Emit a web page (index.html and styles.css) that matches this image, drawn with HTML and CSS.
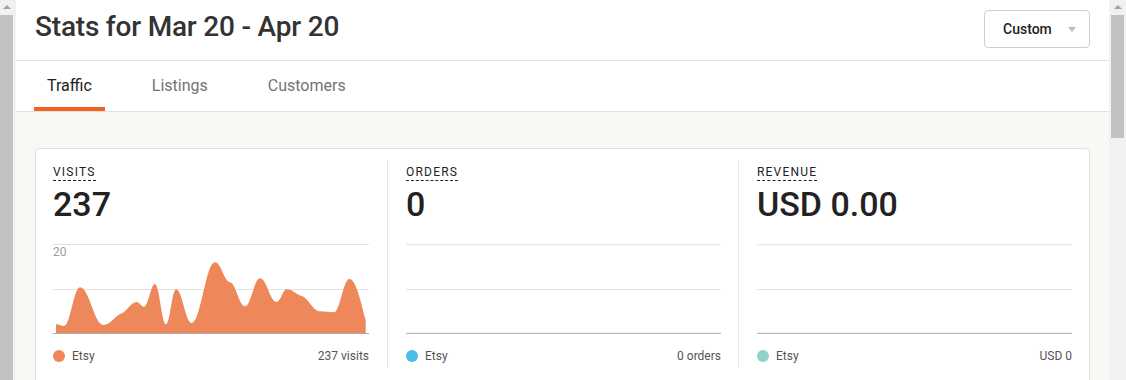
FILE: index.html
```html
<!DOCTYPE html>
<html lang="en">
<head>
<meta charset="utf-8">
<title>Stats</title>
<link rel="stylesheet" href="styles.css">
</head>
<body>
<div class="page">
  <div class="scroll scroll-left">
    <div class="scroll-arrow"></div>
    <div class="scroll-thumb"></div>
  </div>
  <div class="main">
    <header class="header">
      <h1 class="title">Stats for Mar 20 - Apr 20</h1>
      <button class="select" type="button"><span>Custom</span><span class="caret"></span></button>
    </header>
    <nav class="tabs">
      <a class="tab active">Traffic</a>
      <a class="tab">Listings</a>
      <a class="tab">Customers</a>
    </nav>
    <section class="content">
      <div class="card">
        <div class="col">
          <div class="label"><span>Visits</span></div>
          <div class="value">237</div>
          <svg class="chart" viewBox="39 30 948 282" width="316" height="94">
            <line class="grid" x1="39" y1="43.5" x2="987" y2="43.5"/>
            <line class="grid" x1="39" y1="178.5" x2="987" y2="178.5"/>
            <text class="axis" x="39" y="77">20</text>
            <path class="area" d="M48,283 C58,283 62,288 72,288 C91,288 101,172 120,172 C148,172 162,285 190,285 C212,285 223,259 245,250 C263,243 272,216 290,216 C299,216 303,230 312,230 C325,230 332,162 345,162 C358,162 365,283 378,283 C390,283 396,178 408,178 C427,178 436,279 455,279 C483,279 497,97 525,97 C543,97 552,154 570,157 C588,160 597,229 615,229 C633,229 642,145 660,145 C680,145 690,216 710,216 C722,216 728,178 740,178 C758,178 767,193 785,198 C807,205 818,244 840,244 C857,244 865,247 882,247 C900,247 910,147 928,147 C948,147 962,215 977,270 L977,309 L48,309 Z"/>
            <line class="base" x1="39" y1="310.5" x2="987" y2="310.5"/>
          </svg>
          <div class="legend">
            <span class="key"><i class="dot dot-orange"></i>Etsy</span>
            <span>237 visits</span>
          </div>
        </div>
        <div class="col">
          <div class="label"><span>Orders</span></div>
          <div class="value">0</div>
          <svg class="chart" viewBox="39 30 948 282" width="316" height="94">
            <line class="grid" x1="39" y1="43.5" x2="987" y2="43.5"/>
            <line class="grid" x1="39" y1="178.5" x2="987" y2="178.5"/>
            <line class="base" x1="39" y1="310.5" x2="987" y2="310.5"/>
          </svg>
          <div class="legend">
            <span class="key"><i class="dot dot-blue"></i>Etsy</span>
            <span>0 orders</span>
          </div>
        </div>
        <div class="col">
          <div class="label"><span>Revenue</span></div>
          <div class="value">USD 0.00</div>
          <svg class="chart" viewBox="39 30 948 282" width="316" height="94">
            <line class="grid" x1="39" y1="43.5" x2="987" y2="43.5"/>
            <line class="grid" x1="39" y1="178.5" x2="987" y2="178.5"/>
            <line class="base" x1="39" y1="310.5" x2="987" y2="310.5"/>
          </svg>
          <div class="legend">
            <span class="key"><i class="dot dot-teal"></i>Etsy</span>
            <span>USD 0</span>
          </div>
        </div>
      </div>
    </section>
  </div>
  <div class="scroll scroll-right">
    <div class="scroll-arrow"></div>
    <div class="scroll-thumb"></div>
  </div>
</div>
</body>
</html>
```
FILE: styles.css
```css
* { box-sizing: border-box; }
html, body { margin: 0; padding: 0; }
body {
  font-family: Roboto, "Liberation Sans", Arial, sans-serif;
  color: #222;
  background: #f9f8f5;
}
.page {
  display: flex;
  width: 1126px;
  height: 380px;
  overflow: hidden;
}
.scroll {
  display: flex;
  flex-direction: column;
  background: #f1f1f1;
  flex: none;
}
.scroll-left { width: 16px; }
.scroll-right { width: 17px; }
.scroll-arrow {
  height: 15px;
  flex: none;
  position: relative;
}
.scroll-arrow::after {
  content: "";
  position: absolute;
  left: 50%;
  top: 5px;
  margin-left: -4px;
  border-left: 4px solid transparent;
  border-right: 4px solid transparent;
  border-bottom: 4px solid #a3a3a3;
}
.scroll-left .scroll-arrow::after { margin-left: -5px; }
.scroll-thumb { background: #c1c1c1; }
.scroll-left .scroll-thumb { width: 13px; flex: 1; }
.scroll-right .scroll-thumb { width: 13px; height: 123px; margin-left: 2px; flex: none; }

.main {
  flex: 1;
  display: flex;
  flex-direction: column;
  min-width: 0;
  overflow: hidden;
}
.header {
  flex: none;
  height: 61px;
  display: flex;
  justify-content: space-between;
  align-items: flex-start;
  padding: 10px 19px 0 19px;
  background: #fff;
  border-bottom: 1px solid #e1e1e1;
}
.title {
  margin: 0;
  font-size: 28px;
  line-height: 34px;
  font-weight: 500;
  letter-spacing: -0.2px;
  color: #333;
}
.select {
  width: 106px;
  height: 38px;
  display: flex;
  align-items: center;
  padding: 0 13px 0 18px;
  background: #fff;
  border: 1px solid #cfcfcf;
  border-radius: 4px;
  font-family: inherit;
  font-size: 14px;
  font-weight: 500;
  color: #222;
}
.caret {
  margin-left: auto;
  width: 0;
  height: 0;
  border-left: 4px solid transparent;
  border-right: 4px solid transparent;
  border-top: 5px solid #bdbdbd;
}
.tabs {
  flex: none;
  display: flex;
  gap: 34px;
  height: 51px;
  padding-left: 18px;
  background: #fff;
  border-bottom: 1px solid #e1e1e1;
}
.tab {
  height: 50px;
  padding: 15px 13px 0 13px;
  font-size: 16px;
  line-height: 20px;
  color: #737373;
  border-bottom: 4px solid transparent;
}
.tab.active {
  color: #222;
  border-bottom-color: #f1641e;
}
.content {
  flex: none;
  padding: 36px 19px 0 19px;
  background: #f9f8f5;
}
.card {
  display: grid;
  grid-template-columns: repeat(3, 1fr);
  padding: 12px 0 24px 0;
  background: #fff;
  border: 1px solid #e1e1e1;
  border-radius: 4px;
}
.col {
  display: flex;
  flex-direction: column;
  padding: 0 17px 4px 18px;
  border-left: 1px solid #e6e6e6;
}
.col:first-child {
  border-left: 0;
  padding: 0 18px 4px 17px;
}
.label span {
  display: inline-block;
  font-size: 12px;
  line-height: 15px;
  letter-spacing: 1.2px;
  text-transform: uppercase;
  color: #222;
  border-bottom: 1px dashed #222;
}
.value {
  margin-top: 3px;
  font-size: 34px;
  line-height: 40px;
  font-weight: 500;
  color: #222;
}
.chart {
  display: block;
  width: 100%;
  margin-top: 16px;
}
.grid { stroke: #e2e2e2; stroke-width: 3; }
.base { stroke: #ababab; stroke-width: 3; }
.axis { fill: #9e9e9e; font-size: 36px; font-family: Roboto, "Liberation Sans", sans-serif; }
.area { fill: #ee8759; }
.legend {
  display: flex;
  justify-content: space-between;
  align-items: center;
  margin-top: 14px;
  font-size: 12px;
  line-height: 16px;
  color: #555;
}
.key { display: flex; align-items: center; }
.dot {
  display: inline-block;
  width: 12px;
  height: 12px;
  border-radius: 50%;
  margin-right: 7px;
}
.dot-orange { background: #ee8759; }
.dot-blue { background: #4bbde6; }
.dot-teal { background: #8dd3c7; }
```
